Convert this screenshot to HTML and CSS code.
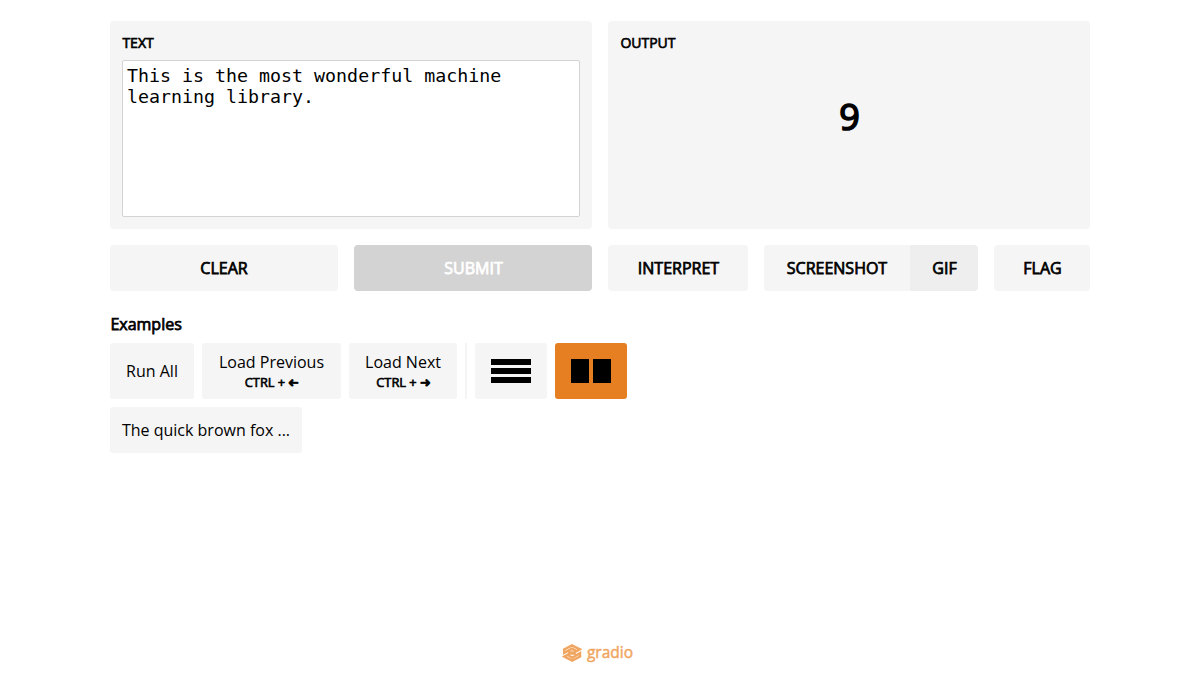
FILE: index.html
```html
<!DOCTYPE html>
<html lang="en">
<head>
<meta charset="utf-8">
<title>Gradio</title>
<link rel="stylesheet" href="styles.css">
</head>
<body>
<main class="container">
  <div class="panels">
    <section class="column">
      <div class="panel">
        <div class="panel-header">TEXT</div>
        <textarea class="input-text" spellcheck="false">This is the most wonderful machine learning library.</textarea>
      </div>
      <div class="buttons">
        <button class="panel-button clear">CLEAR</button>
        <button class="panel-button submit">SUBMIT</button>
      </div>
    </section>
    <section class="column">
      <div class="panel">
        <div class="panel-header">OUTPUT</div>
        <div class="output-number">9</div>
      </div>
      <div class="buttons">
        <button class="panel-button interpret">INTERPRET</button>
        <div class="screenshot">
          <button class="panel-button shot">SCREENSHOT</button>
          <button class="panel-button gif">GIF</button>
        </div>
        <button class="panel-button flag">FLAG</button>
      </div>
    </section>
  </div>
  <section class="examples">
    <h4 class="examples-title">Examples</h4>
    <div class="examples-control">
      <button class="control run-all">Run All</button>
      <button class="control previous">Load Previous<small class="shortcut">CTRL + <span class="arrow back">➜</span></small></button>
      <button class="control next">Load Next<small class="shortcut">CTRL + <span class="arrow">➜</span></small></button>
      <div class="divider"></div>
      <button class="control view" aria-label="Table view"><svg width="40" height="24"><path d="M0 0h40v6H0zM0 9h40v6H0zM0 18h40v6H0z"/></svg></button>
      <button class="control view current" aria-label="Gallery view"><svg width="40" height="24"><path d="M0 0h18v24H0zM22 0h18v24H22z"/></svg></button>
    </div>
    <button class="example">The quick brown fox ...</button>
  </section>
</main>
<footer class="footer">
  <svg class="logo" width="20" height="20" viewBox="0 0 20 20" fill="none" stroke="#f0a661" stroke-width="2.5" stroke-linejoin="miter">
    <path d="M13.4 11.4L10 9.4 2.4 13.7l7.8 4 7.8-4.2v-3.3l-7.8 4.3-3.6-2"/>
    <path d="M6.6 8.6L10 10.6l7.8-4.3L10 2.3 2.2 6.4v3.4L10 5.6l3.6 2"/>
  </svg>
  <span class="brand">gradio</span>
</footer>
</body>
</html>
```
FILE: styles.css
```css
* { box-sizing: border-box; }

body {
  margin: 0;
  height: 684px;
  display: flex;
  flex-direction: column;
  font: 16px/24px "Open Sans", sans-serif;
  color: #000;
  background: #fff;
  overflow: hidden;
}

button {
  border: 0;
  padding: 0;
  margin: 0;
  font: inherit;
  color: inherit;
  background: #f5f5f5;
  border-radius: 3px;
}

.container { width: 980px; margin: 21px auto 0; }
.panels { display: flex; gap: 16px; }
.column { flex: 1; min-width: 0; }

.panel {
  height: 208px;
  padding: 12px;
  display: flex;
  flex-direction: column;
  background: #f5f5f5;
  border-radius: 4px;
}

.panel-header {
  font-size: 14px;
  line-height: 20px;
  margin-bottom: 7px;
  text-indent: .4px;
  -webkit-text-stroke: .65px;
}

.input-text {
  flex: 1;
  width: 100%;
  padding: 4px;
  border: 1px solid #d3d3d3;
  border-radius: 2px;
  font: 18.3px/21px "DejaVu Sans Mono", monospace;
  color: #000;
  background: #fff;
  resize: none;
  outline: none;
}

.output-number {
  height: 113px;
  padding-left: 1px;
  display: flex;
  align-items: center;
  justify-content: center;
  font-size: 36px;
  -webkit-text-stroke: 1.6px;
}

.buttons { display: flex; gap: 16px; margin-top: 16px; }

.panel-button {
  height: 46px;
  border-radius: 4px;
  -webkit-text-stroke: .75px;
}

.clear { width: 228px; }
.submit { width: 238px; background: #d3d3d3; color: #fff; }
.interpret { width: 140px; padding-left: 1px; }
.screenshot { display: flex; width: 214px; }
.shot { width: 146px; border-radius: 4px 0 0 4px; }
.gif { width: 68px; padding-left: 1px; background: #eee; border-radius: 0 4px 4px 0; }
.flag { width: 96px; padding-left: 1px; }
.submit { padding-left: 1px; }

.examples-title {
  margin: 21px 0 7px;
  font-size: 16px;
  font-weight: 400;
  text-indent: .4px;
  -webkit-text-stroke: .75px;
}

.examples-control { display: flex; gap: 8px; }
.control { height: 56px; }
.run-all { width: 84px; }
.previous { width: 139px; }
.next { width: 108px; }
.previous, .next { line-height: 22px; }

.shortcut {
  display: block;
  padding-left: 1px;
  font-size: 12.8px;
  line-height: 18px;
  -webkit-text-stroke: .62px;
}

.arrow { display: inline-block; font-family: "DejaVu Sans", sans-serif; -webkit-text-stroke: .8px; }
.back { transform: scaleX(-1); }
.divider { width: 2px; background: #f5f5f5; }
.view { width: 72px; display: flex; align-items: center; justify-content: center; }
.current { background: #e67e22; }
.example { display: block; width: 192px; height: 46px; margin-top: 8px; }

.footer {
  margin: auto 0 21px;
  padding-right: 5px;
  height: 20px;
  display: flex;
  align-items: center;
  justify-content: center;
  gap: 5px;
}

.brand {
  font-size: 15.5px;
  line-height: 18px;
  padding-bottom: 2px;
  -webkit-text-stroke: .45px;
  color: #f0a661;
}
```
